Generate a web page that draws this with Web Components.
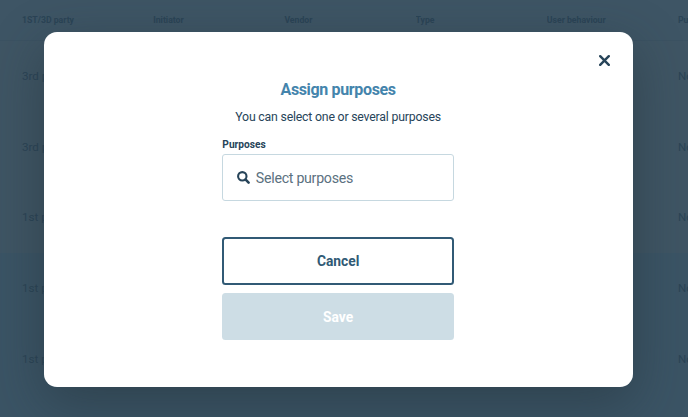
<!DOCTYPE html>
<html lang="en">
<head>
<meta charset="utf-8">
<title>Assign purposes</title>
<style>
	html, body {
		margin: 0;
		width: 100%;
		height: 100%;
		overflow: hidden;
		background: #3b5465;
		font-family: Roboto, "Noto Sans", sans-serif;
		color: #274459;
	}
</style>
</head>
<body>
<vendor-table></vendor-table>
<modal-dialog>
	<span slot="title">Assign purposes</span>
	<span slot="text">You can select one or several purposes</span>
	<search-field label="Purposes" placeholder="Select purposes"></search-field>
	<action-button slot="actions">Cancel</action-button>
	<action-button slot="actions" disabled>Save</action-button>
</modal-dialog>

<script>
class VendorTable extends HTMLElement {

	constructor() {
		super();
		const shadowRoot = this.attachShadow({ mode: 'open' });
		this.columns = ['1ST/3D party', 'Initiator', 'Vendor', 'Type', 'User behaviour', 'Purposes'];
		this.parties = ['3rd party', '3rd party', '1st party', '1st party', '1st party'];
		shadowRoot.innerHTML = this.template;
	}

	get template() {
		const head = this.columns.map(name => `<span>${name}</span>`).join('');
		const rows = this.parties.map(party => `<div class="row">
		<span>${party}</span><span></span><span></span><span></span><span></span><span>None</span>
	</div>`).join('');
		return `<style>
	:host {
		display: block;
		width: 100%;
		height: 100%;
		overflow: hidden;
		color: #2b4456;
	}
	.row {
		display: grid;
		grid-template-columns: repeat(5, 131.2px) 1fr;
		align-items: center;
		box-sizing: border-box;
		height: 70.6px;
		padding-left: 22px;
		font-size: 11.6px;
		background: #3f5564;
	}
	.row span {
		min-width: 0;
		overflow: hidden;
		white-space: nowrap;
	}
	.row:nth-of-type(n+5) {
		background: #3b5465;
	}
	.head {
		height: 41px;
		padding-bottom: 1px;
		border-bottom: 1px solid #3b5262;
		font-size: 8.7px;
		font-weight: bold;
		background: #3e5565;
	}
	</style>
	<div class="row head">${head}</div>
	${rows}`;
	}
}

class ModalDialog extends HTMLElement {

	constructor() {
		super();
		this.attachShadow({ mode: 'open' }).innerHTML = this.template;
	}

	get template() {
		return `<style>
	:host {
		position: absolute;
		top: 32px;
		left: 43.6px;
		display: flex;
		flex-direction: column;
		align-items: center;
		box-sizing: border-box;
		width: 589px;
		height: 355px;
		padding-top: 47px;
		border-radius: 13px;
		background: #fff;
		box-shadow: 0 16px 52px rgba(30, 44, 50, .45);
	}
	.close {
		position: absolute;
		top: 23px;
		right: 23px;
		display: flex;
		padding: 0;
		border: 0;
		background: none;
	}
	h1 {
		margin: 0;
		font-size: 16px;
		line-height: 22px;
		letter-spacing: -.35px;
		color: #4484ac;
	}
	p {
		margin: 7px 0 10px;
		font-size: 12.3px;
		line-height: 18px;
		letter-spacing: -.2px;
	}
	.content {
		width: 231.5px;
	}
	.actions {
		display: flex;
		flex-direction: column;
		gap: 8px;
		width: 231.5px;
		margin-top: 36px;
	}
	</style>
	<button class="close" aria-label="Close">
		<svg width="11" height="11" viewBox="0 0 11 11"><path d="M1.2 1.2l8.6 8.6M9.8 1.2L1.2 9.8" fill="none" stroke="#274459" stroke-width="2.4" stroke-linecap="round"/></svg>
	</button>
	<h1><slot name="title"></slot></h1>
	<p><slot name="text"></slot></p>
	<div class="content"><slot></slot></div>
	<div class="actions"><slot name="actions"></slot></div>`;
	}
}

class SearchField extends HTMLElement {

	constructor() {
		super();
		this.attachShadow({ mode: 'open' }).innerHTML = this.template;
	}

	get template() {
		return `<style>
	:host {
		display: block;
	}
	label {
		display: block;
		height: 18px;
		font-size: 10.2px;
		font-weight: bold;
		line-height: 18px;
	}
	.field {
		display: flex;
		align-items: center;
		gap: 6px;
		box-sizing: border-box;
		height: 47px;
		padding: 0 0 0 13.5px;
		border: 1px solid #c6d8e0;
		border-radius: 3px;
		font-size: 14.2px;
		letter-spacing: -.28px;
		color: #5b7180;
	}
	</style>
	<label>${this.getAttribute('label')}</label>
	<div class="field">
		<svg width="13" height="13" viewBox="0 0 13 13" fill="none" stroke="#274459" stroke-linecap="round"><circle cx="5.3" cy="5.3" r="4.2" stroke-width="2.1"/><path d="M8.7 8.7l2.9 2.9" stroke-width="2.6"/></svg>
		<span>${this.getAttribute('placeholder')}</span>
	</div>`;
	}
}

class ActionButton extends HTMLElement {

	constructor() {
		super();
		this.attachShadow({ mode: 'open' }).innerHTML = this.template;
	}

	get template() {
		return `<style>
	:host {
		display: block;
	}
	button {
		display: block;
		box-sizing: border-box;
		width: 100%;
		height: 47.5px;
		padding: 0;
		border: 2px solid #315a75;
		border-radius: 3.5px;
		background: #fff;
		font: bold 13.8px Roboto, "Noto Sans", sans-serif;
		color: #315a75;
	}
	:host([disabled]) button {
		padding-top: 1px;
		border-color: #cddde5;
		background: #cddde5;
		color: #fff;
	}
	</style>
	<button><slot></slot></button>`;
	}
}

window.customElements.define('vendor-table', VendorTable);
window.customElements.define('modal-dialog', ModalDialog);
window.customElements.define('search-field', SearchField);
window.customElements.define('action-button', ActionButton);
</script>
</body>
</html>
